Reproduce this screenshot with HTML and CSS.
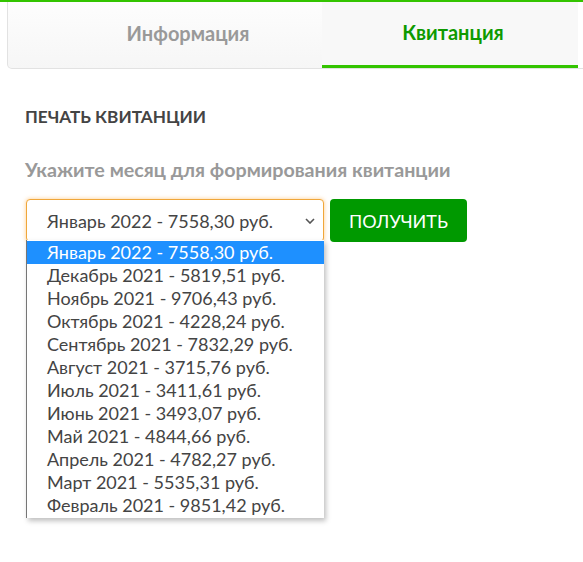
FILE: index.html
```html
<!DOCTYPE html>
<html lang="ru">
<head>
<meta charset="utf-8">
<title>Квитанция</title>
<link rel="stylesheet" href="styles.css">
</head>
<body>
<div class="topline"></div>
<nav class="tabs">
  <div class="tab tab-info">Информация</div>
  <div class="tab tab-active">Квитанция</div>
  <div class="tab-rest"></div>
</nav>
<main class="content">
  <h2 class="section-title">ПЕЧАТЬ КВИТАНЦИИ</h2>
  <p class="hint">Укажите месяц для формирования квитанции</p>
  <div class="form-row">
    <div class="select-wrap">
      <div class="select">
        <span class="select-value">Январь 2022 - 7558,30 руб.</span>
        <svg class="chevron" width="10" height="6" viewBox="0 0 10 6"><path d="M1 1 L5 5 L9 1" fill="none" stroke="#555" stroke-width="1.6"/></svg>
      </div>
      <ul class="options">
        <li class="option selected">Январь 2022 - 7558,30 руб.</li>
        <li class="option">Декабрь 2021 - 5819,51 руб.</li>
        <li class="option">Ноябрь 2021 - 9706,43 руб.</li>
        <li class="option">Октябрь 2021 - 4228,24 руб.</li>
        <li class="option">Сентябрь 2021 - 7832,29 руб.</li>
        <li class="option">Август 2021 - 3715,76 руб.</li>
        <li class="option">Июль 2021 - 3411,61 руб.</li>
        <li class="option">Июнь 2021 - 3493,07 руб.</li>
        <li class="option">Май 2021 - 4844,66 руб.</li>
        <li class="option">Апрель 2021 - 4782,27 руб.</li>
        <li class="option">Март 2021 - 5535,31 руб.</li>
        <li class="option">Февраль 2021 - 9851,42 руб.</li>
      </ul>
    </div>
    <button class="btn">ПОЛУЧИТЬ</button>
  </div>
</main>
</body>
</html>
```

FILE: styles.css
```css
html, body {
  margin: 0;
  padding: 0;
  background: #fff;
  overflow: hidden;
}
body {
  font-family: Lato, "Open Sans", sans-serif;
  color: #444;
  width: 583px;
  height: 562px;
}
.topline {
  height: 2px;
  background: #33c400;
}
.tabs {
  display: flex;
  margin-left: 7px;
  margin-right: -20px;
  height: 66px;
  border: 1px solid #e2e2e2;
  border-top: none;
  border-radius: 0 0 5px 5px;
  background: linear-gradient(#fdfdfd, #f6f6f6);
}
.tab {
  display: flex;
  align-items: center;
  justify-content: center;
  font-weight: 700;
  font-size: 20px;
  box-sizing: border-box;
  padding-bottom: 4px;
}
.tab-info {
  flex: 0 0 314px;
  padding-left: 46px;
  color: #999;
}
.tab-active {
  flex: 0 0 256px;
  color: #0e9a00;
  background: #f8f8f8;
  border-bottom: 3px solid #33c400;
  padding-left: 6px;
}
.tab-rest {
  flex: 1;
  background: #fff;
}
.content {
  padding: 0 25px;
}
.section-title {
  margin: 38px 0 0;
  font-size: 17.2px;
  font-weight: 700;
  color: #444;
  line-height: 20px;
}
.hint {
  margin: 31px 0 0;
  font-size: 19.7px;
  font-weight: 700;
  color: #999;
  line-height: 24px;
}
.form-row {
  display: flex;
  gap: 6px;
  margin-top: 17px;
}
.select-wrap {
  position: relative;
}
.select {
  box-sizing: border-box;
  width: 298px;
  height: 43px;
  margin-left: 1px;
  border: 1px solid #f0a73a;
  border-radius: 4px;
  box-shadow: 0 0 4px rgba(255, 160, 40, 0.55);
  display: flex;
  align-items: center;
  justify-content: space-between;
  padding: 0 8px 0 20px;
  font-size: 18px;
  color: #444;
  background: #fff;
}
.chevron {
  display: block;
}
.options {
  position: absolute;
  left: 1px;
  top: 41px;
  width: 298px;
  box-sizing: border-box;
  margin: 0;
  padding: 1px 0 1px;
  list-style: none;
  background: #fff;
  border-left: 1px solid #767676;
  box-shadow: 2px 3px 5px rgba(0, 0, 0, 0.25);
}
.option {
  height: 23px;
  line-height: 23px;
  padding-left: 20px;
  font-size: 18px;
  color: #444;
  white-space: nowrap;
}
.option.selected {
  background: #1e90ff;
  color: #fff;
}
.btn {
  width: 137px;
  height: 43px;
  border: none;
  border-radius: 4px;
  background: #009900;
  color: #fff;
  font-family: Lato, "Open Sans", sans-serif;
  font-size: 18px;
  font-weight: 400;
  padding: 0;
}
```
